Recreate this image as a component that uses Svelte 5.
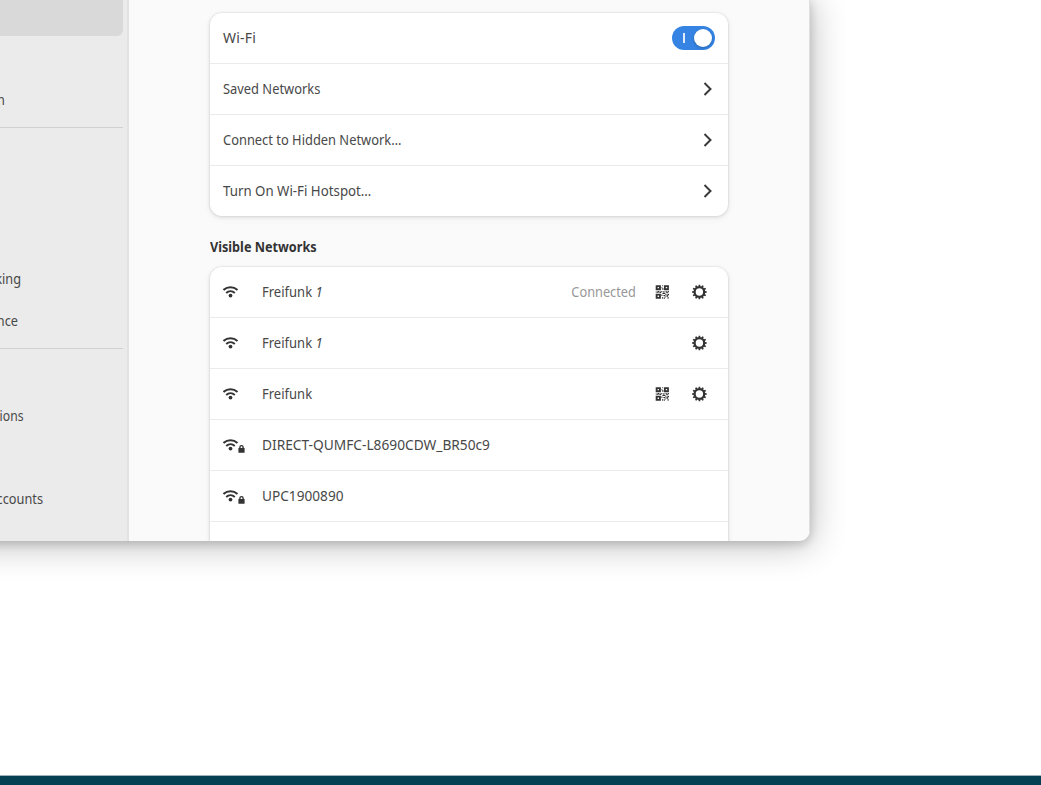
<script>
  const links = [
    { text: 'Saved Networks', scale: 0.92 },
    { text: 'Connect to Hidden Network…', scale: 0.92 },
    { text: 'Turn On Wi-Fi Hotspot…', scale: 0.948 }
  ];
  const networks = [
    { name: 'Freifunk', num: '1', status: 'Connected', qr: true, gear: true, scale: 0.93 },
    { name: 'Freifunk', num: '1', gear: true, scale: 0.93 },
    { name: 'Freifunk', qr: true, gear: true, scale: 0.93 },
    { name: 'DIRECT-QUMFC-L8690CDW_BR50c9', lock: true, scale: 0.98 },
    { name: 'UPC1900890', lock: true, scale: 0.975 },
    { name: '' }
  ];
</script>

<div class="desktop">
  <div class="window">
    <aside>
      <div class="selected"></div>
      <div class="item first">n</div>
      <hr class="one" />
      <div class="item king">king</div>
      <div class="item nce">nce</div>
      <hr class="two" />
      <div class="item ions">ions</div>
      <div class="item accounts">ccounts</div>
    </aside>
    <main>
      <section class="card">
        <div class="row">
          <span class="grow wifi">Wi-Fi</span>
          <span class="switch"><i></i><b></b></span>
        </div>
        {#each links as link}
          <div class="row">
            <span class="grow" style="transform:scaleX({link.scale})">{link.text}</span>
            <svg class="chevron" width="10" height="14" viewBox="0 0 10 14"><path d="M2.2 1.7 7.5 7 2.2 12.3" fill="none" stroke="#3a3a3a" stroke-width="2" stroke-linecap="square" /></svg>
          </div>
        {/each}
      </section>
      <h2>Visible Networks</h2>
      <section class="card">
        {#each networks as n}
          <div class="row net">
            {#if n.name}
              <svg class="signal" width="24" height="16" viewBox="0 0 24 16">
                <g fill="none" stroke="#333" stroke-width="2">
                  <path d="M.5 6A10.6 10.6 0 0 1 14.5 6" />
                  <path d="M3.2 8.9A6.6 6.6 0 0 1 11.8 8.9" />
                </g>
                <circle cx="7.5" cy="11.6" r="1.9" fill="#333" />
                {#if n.lock}
                  <path d="M16.9 11.5V10.2a1.6 1.6 0 0 1 3.2 0v1.3" fill="none" stroke="#333" stroke-width="1.4" />
                  <rect x="15.4" y="11" width="6.2" height="4.7" rx=".5" fill="#333" />
                {/if}
              </svg>
              <span class="grow" style="transform:scaleX({n.scale})">{n.name}{#if n.num}{' '}<em>{n.num}</em>{/if}</span>
              {#if n.status}<span class="status">{n.status}</span>{/if}
              {#if n.qr}
                <svg class="qr" width="14" height="14" viewBox="-.4 0 14 14" fill="#333">
                  <path fill-rule="evenodd" d="M.3.3h5.2v4.9H.3zM2.2 2v1.2h1.4V2zM8.6.3h4.9v4.9H8.6zM10.4 2v1.2h1.4V2zM.3 8.8h5.2v4.9H.3zM2.2 10.6v1.3h1.4v-1.3z" />
                  <path d="M6.8.3h1v1h-1zM6 2.2h1v1H6zM7 3h1v2H7zM.3 6.6h1v1h-1zM2 6h2v1H2zM1.3 7.2h2v.8h-2zM5 6.2h2v1H5zM4 7h1.7v1H4zM8 6h1v2H8zM10 6.2h2v1h-2zM12.5 6h1v1h-1zM7 8h3v1H7zM11 7.2h2v1h-2zM6 9.4h1v1.5H6zM8 10h2v1H8zM10 9h1v1h-1zM12 9h1.6v1.3H12zM11 10.3h1.7v1.5H11zM6.8 12h1v1.8h-1zM9 11.4h1.4v1H9zM12.2 12h1v1.8h-1zM8.5 12.8h1v1h-1z" />
                </svg>
              {/if}
              {#if n.gear}
                <svg class="gear" width="16" height="16" viewBox="-8.4 -8 16 16">
                  <circle r="4.8" fill="none" stroke="#333" stroke-width="2.2" />
                  {#each Array(12) as _, i}
                    <path d="M-1-5.2-.8-7.3H.8L1-5.2z" fill="#333" transform="rotate({i * 30})" />
                  {/each}
                </svg>
              {/if}
            {/if}
          </div>
        {/each}
      </section>
    </main>
  </div>
  <footer></footer>
</div>

<style>
  .desktop {
    height: 785px;
    overflow: hidden;
    background: #fff;
    display: flex;
    flex-direction: column;
    justify-content: space-between;
    font: 14px/20px "Noto Sans", sans-serif;
    color: #484848;
  }
  .window {
    width: 870px;
    height: 541px;
    margin-left: -60px;
    display: flex;
    border-radius: 0 0 11px 0;
    box-shadow: 0 3px 9px 1px rgba(0, 0, 0, 0.15), 0 3px 34px 3px rgba(0, 0, 0, 0.24);
    background: #fafafa;
    overflow: hidden;
    flex-shrink: 0;
  }
  aside {
    width: 187px;
    border-right: 2px solid #e2e2e2;
    background: #ebebeb;
    flex-shrink: 0;
  }
  .selected { width: 183px; height: 36px; background: #d9d9d9; border-radius: 0 0 6px 0; }
  .item { height: 20px; text-align: right; white-space: nowrap; transform: scaleX(0.91); transform-origin: right; }
  .first { width: 65px; margin-top: 54px; }
  hr { width: 183px; height: 1px; border: 0; margin: 0; background: #d1d1d1; }
  .one { margin-top: 17px; }
  .king { width: 81px; margin-top: 141px; }
  .nce { width: 78px; margin-top: 22px; }
  .two { margin-top: 17px; }
  .ions { width: 83.5px; margin-top: 57px; transform: scaleX(0.87); }
  .accounts { width: 103px; margin-top: 63px; }
  main {
    flex: 1;
    padding: 13px 81px 0;
    border-right: 1px solid #e0e0e0;
  }
  .card {
    border-radius: 12px;
    background: #fff;
    box-shadow: 0 0 0 1px rgba(0, 0, 0, 0.03), 0 1px 3px 1px rgba(0, 0, 0, 0.07), 0 2px 6px 2px rgba(0, 0, 0, 0.03);
  }
  .row {
    height: 50px;
    padding: 0 13px;
    display: flex;
    align-items: center;
    white-space: nowrap;
  }
  .row + .row { border-top: 1px solid #ebebeb; }
  .grow { transform-origin: left; margin-right: auto; }
  .wifi { letter-spacing: 0.2px; }
  .switch {
    width: 43px;
    height: 24px;
    border-radius: 12px;
    background: #3584e4;
    display: flex;
    align-items: center;
    box-sizing: border-box;
    padding: 0 3px 0 11px;
    justify-content: space-between;
  }
  .switch i { width: 2px; height: 10px; background: #dfeafa; }
  .switch b { width: 18px; height: 18px; border-radius: 50%; background: #fff; box-shadow: 0 1px 3px rgba(0, 0, 0, 0.25); }
  .chevron { margin-right: 2px; }
  h2 { margin: 21px 0 10px; font-size: 14px; line-height: 20px; font-weight: 700; color: #333; transform: scaleX(0.903); transform-origin: left; }
  .signal { margin-right: 15px; }
  .net { padding-right: 21px; }
  .status { color: #979797; margin-right: 19.5px; transform: scaleX(0.91); transform-origin: right; }
  .qr { margin-right: 22px; }
  footer { height: 9px; border-top: 1px solid #9fb5bd; background: #043f52; flex-shrink: 0; }
</style>
